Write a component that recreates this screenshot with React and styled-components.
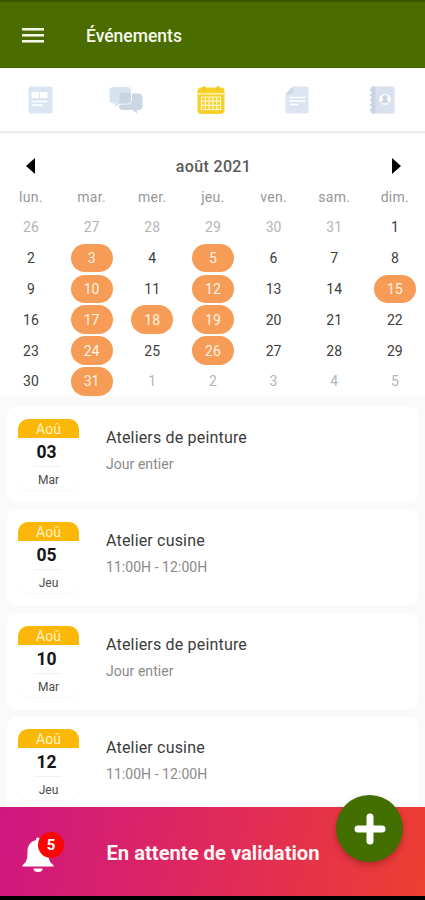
import React from 'react';
import styled, { createGlobalStyle } from 'styled-components';

const GlobalStyle = createGlobalStyle`
    * {
        box-sizing: border-box;
    }

    body {
        margin: 0;
        font-family: Roboto, "Liberation Sans", sans-serif;
        background: #fff;
    }

    button {
        padding: 0;
        border: 0;
        background: none;
        font: inherit;
        cursor: pointer;
    }
`;

const Screen = styled.div`
    display: flex;
    flex-direction: column;
    width: 425px;
    height: 900px;
    overflow: hidden;
    background: #fff;
`;

const Header = styled.header`
    display: flex;
    align-items: center;
    flex: none;
    height: 68px;
    padding: 2px 0 0 22px;
    border-top: 2px solid #3b5500;
    border-bottom: 1px solid #436200;
    background: #4b6d00;
`;

const MenuButton = styled.button`
    display: flex;
    flex-direction: column;
    gap: 3px;
    width: 22px;
    margin-right: 42px;
`;

const MenuLine = styled.span`
    height: 3px;
    border-bottom: 1px solid #a9ba80;
    background: #f4f7ea;
`;

const HeaderTitle = styled.h1`
    margin: 0;
    color: #f6f8ee;
    font-size: 17.5px;
    font-weight: 500;
    line-height: 22px;
`;

const Tabs = styled.nav`
    display: grid;
    grid-template-columns: repeat(5, 85.4px);
    flex: none;
    height: 65px;
    margin-left: -2px;
    border-bottom: 2px solid #ececec;
    box-shadow: 0 1px 3px rgba(0, 0, 0, 0.06);
`;

const Tab = styled.button`
    display: flex;
    align-items: center;
    justify-content: center;
    padding-top: 1px;
`;

const Calendar = styled.section`
    flex: none;
    height: 263px;
    padding-top: 21px;
`;

const MonthBar = styled.div`
    display: flex;
    align-items: center;
    justify-content: space-between;
    height: 24px;
    padding: 0 24px 0 26px;
`;

const Month = styled.h2`
    margin: 0;
    color: #5a5a5a;
    font-size: 16px;
    font-weight: 500;
    letter-spacing: 0.35px;
`;

const ArrowButton = styled.button`
    display: flex;
`;

const Week = styled.div`
    display: grid;
    grid-template-columns: repeat(7, 60.67px);
    height: ${(props) => (props.$head ? '34px' : '30.8px')};
    margin-left: 0.6px;
    align-items: center;
    justify-items: center;
`;

const WeekDay = styled.span`
    color: #979797;
    font-size: 14px;
    letter-spacing: 0.3px;
    padding-top: 4px;
`;

const Day = styled.span`
    display: flex;
    align-items: center;
    justify-content: center;
    width: 42px;
    height: 28.6px;
    border-radius: 15px;
    font-size: 14px;
    color: ${(props) => (props.$marked ? '#fff3e6' : props.$outside ? '#b5b5b5' : '#3d3d3d')};
    background: ${(props) => (props.$marked ? '#f79c56' : 'transparent')};
`;

const EventList = styled.main`
    display: flex;
    flex-direction: column;
    gap: 8.3px;
    flex: 1;
    min-height: 0;
    overflow: hidden;
    padding: 11px 7px 0;
    background: #fafafa;
`;

const EventCard = styled.article`
    display: flex;
    flex: none;
    height: 95px;
    padding: 12px 11px 0;
    border-radius: 9px;
    background: #fff;
`;

const DateBadge = styled.div`
    display: flex;
    flex-direction: column;
    align-items: center;
    width: 61px;
    height: 71px;
    margin-right: 27px;
    border-radius: 10px;
    overflow: hidden;
    box-shadow: 0 1px 2px rgba(0, 0, 0, 0.04);
`;

const BadgeMonth = styled.div`
    flex: none;
    width: 100%;
    height: 19px;
    background: #fbb808;
    color: #fff2c4;
    font-size: 14px;
    line-height: 21px;
    text-align: center;
`;

const BadgeDay = styled.div`
    flex: none;
    height: 28px;
    padding-right: 4px;
    color: #161616;
    font-size: 17.5px;
    font-weight: 700;
    line-height: 28px;
`;

const BadgeRule = styled.div`
    flex: none;
    width: 27px;
    height: 1px;
    margin-right: 2px;
    background: #f0f0f0;
`;

const BadgeWeekDay = styled.div`
    color: #4b4b4b;
    font-size: 12px;
    line-height: 26px;
`;

const EventTitle = styled.h3`
    margin: 9px 0 0;
    color: #3c3c3c;
    font-size: 16px;
    font-weight: 400;
    line-height: 20px;
    letter-spacing: 0.18px;
`;

const EventTime = styled.p`
    margin: 7px 0 0;
    color: #8a8a8a;
    font-size: 14px;
    line-height: 18px;
    letter-spacing: 0.05px;
`;

const Pending = styled.footer`
    position: relative;
    display: flex;
    align-items: center;
    flex: none;
    height: 89px;
    padding: 2px 0 0 20px;
    background: linear-gradient(100deg, #cf1781 0%, #df285d 48%, #ed3f32 100%);
`;

const BellButton = styled.button`
    position: relative;
    display: flex;
    width: 36px;
    height: 38px;
    margin-right: 50.5px;
`;

const Count = styled.span`
    position: absolute;
    top: -2px;
    left: 18px;
    width: 26px;
    height: 26px;
    border-radius: 50%;
    background: #fb0505;
    color: #fff;
    font-size: 15px;
    font-weight: 700;
    line-height: 26px;
    text-align: center;
`;

const PendingLabel = styled.span`
    color: #fff5f5;
    font-size: 20.2px;
    font-weight: 700;
`;

const AddButton = styled.button`
    position: absolute;
    top: -12px;
    right: 22px;
    display: flex;
    align-items: center;
    justify-content: center;
    width: 67px;
    height: 67px;
    border-radius: 50%;
    background: #436e00;
    box-shadow: 0 3px 6px rgba(60, 0, 0, 0.3);
`;

const SystemBar = styled.div`
    flex: none;
    height: 4px;
    background: #000;
`;

const NewsIcon = () => (
    <svg width="25" height="28" viewBox="0 0 25 28">
        <rect x="0.5" y="0.5" width="24" height="27" rx="2.500" fill="#dae5f1" />
        <path d="M3.500 6h7.500v6H3.500zM12 6h7.500v6H12z" fill="#fff" />
        <path d="M3.500 15.500h16M3.500 19h11" stroke="#fff" strokeWidth="1.500" />
    </svg>
);

const ChatIcon = () => (
    <svg width="36" height="28" viewBox="0 0 36 28">
        <path d="M14 7.500h16.500a4 4 0 0 1 4 4V20a4 4 0 0 1-4 4h-1.500v3.500L24.500 24H15a4 4 0 0 1-4-4z" fill="#ccd7e4" />
        <path
            d="M5 .5h14.500a4 4 0 0 1 4 4v9.500a4 4 0 0 1-4 4H12L7 21.500V18H5a4 4 0 0 1-4-4V4.500a4 4 0 0 1 4-4z"
            fill="#d8e3f0"
            stroke="#fff"
            strokeWidth="1"
        />
        <path d="M14.500 6.500H23V14a3.500 3.500 0 0 1-3.500 3.500h-8v-8a3 3 0 0 1 3-3z" fill="#c9d5e3" />
    </svg>
);

const CalendarIcon = () => (
    <svg width="28" height="29" viewBox="0 0 28 29">
        <path d="M4 1.500h20a3.500 3.500 0 0 1 3.500 3.500v19a4 4 0 0 1-4 4h-19a4 4 0 0 1-4-4V5A3.500 3.500 0 0 1 4 1.500z" fill="#f6d12c" />
        <path d="M7 1.500v2M21 1.500v2" stroke="#f3c91c" strokeWidth="3" strokeLinecap="round" />
        <path d="M1 7.800h26" stroke="#fff3b8" strokeWidth="1.400" />
        <path
            d="M4.500 11h19v12.500h-19zM4.500 15.200h19M4.500 19.400h19M8.300 11v12.500M12.100 11v12.500M15.900 11v12.500M19.700 11v12.500"
            fill="none"
            stroke="#fff7cf"
            strokeWidth="1.200"
        />
    </svg>
);

const DocumentIcon = () => (
    <svg width="24" height="28" viewBox="0 0 24 28">
        <path d="M8 .5h12.500a3 3 0 0 1 3 3v21a3 3 0 0 1-3 3h-17a3 3 0 0 1-3-3V8z" fill="#dde4f1" />
        <path d="M8 .5V5a3 3 0 0 1-3 3H.5z" fill="#cbd6e5" />
        <path d="M4.500 11.500h16M4.500 15h16M4.500 18.500h9" stroke="#fff" strokeWidth="1.600" />
    </svg>
);

const ContactsIcon = () => (
    <svg width="25" height="28" viewBox="0 0 25 28">
        <rect x="1.500" y="0.500" width="23" height="27" rx="1.500" fill="#d9e1ee" />
        <path d="M1.500 .5h4v27h-4z" fill="#cad5e4" />
        <path d="M0 4h3M0 9h3M0 14h3M0 19h3M0 24h3" stroke="#cad5e4" strokeWidth="2" />
        <path d="M9 14a6 6 0 1 1 12 0l-1.500 2.500h-9z" fill="#fff" />
        <circle cx="15" cy="11.500" r="2.500" fill="#c8d4e3" />
        <path d="M11.500 16.500c0-2 1.500-3 3.500-3s3.500 1 3.500 3z" fill="#c8d4e3" />
        <path d="M12 18h6" stroke="#fff" strokeWidth="1.200" />
    </svg>
);

const BellIcon = () => (
    <svg width="36" height="38" viewBox="0 0 36 38">
        <path
            d="M18 3.500c1.400 0 2 1.100 2 2.700 5.700 1.200 8.500 5.600 8.500 11.500 0 7.500.8 10 5 13.500v1.300H2.500v-1.300c4.200-3.500 5-6 5-13.500C7.500 11.800 10.300 7.400 16 6.200c0-1.600.6-2.700 2-2.700z"
            fill="#fff"
        />
        <path d="M13.500 34.500h9a4.500 3.500 0 0 1-9 0z" fill="#fff" />
    </svg>
);

const tabs = [NewsIcon, ChatIcon, CalendarIcon, DocumentIcon, ContactsIcon];

const weekDays = ['lun.', 'mar.', 'mer.', 'jeu.', 'ven.', 'sam.', 'dim.'];

const weeks = [
    [26, 27, 28, 29, 30, 31, 1],
    [2, 3, 4, 5, 6, 7, 8],
    [9, 10, 11, 12, 13, 14, 15],
    [16, 17, 18, 19, 20, 21, 22],
    [23, 24, 25, 26, 27, 28, 29],
    [30, 31, 1, 2, 3, 4, 5],
];

const eventDays = [3, 5, 10, 12, 15, 17, 18, 19, 24, 26, 31];

const events = [
    { day: '03', weekDay: 'Mar', title: 'Ateliers de peinture', time: 'Jour entier' },
    { day: '05', weekDay: 'Jeu', title: 'Atelier cusine', time: '11:00H - 12:00H' },
    { day: '10', weekDay: 'Mar', title: 'Ateliers de peinture', time: 'Jour entier' },
    { day: '12', weekDay: 'Jeu', title: 'Atelier cusine', time: '11:00H - 12:00H' },
];

// days of the previous or next month that fill the first and last rows
const isOutside = (day, row) => (row === 0 && day > 20) || (row === 5 && day < 10);

function App() {
    return (
        <Screen>
            <GlobalStyle />
            <Header>
                <MenuButton aria-label="Menu">
                    <MenuLine />
                    <MenuLine />
                    <MenuLine />
                </MenuButton>
                <HeaderTitle>Événements</HeaderTitle>
            </Header>

            <Tabs>
                {tabs.map((Icon, index) => (
                    <Tab key={index}>
                        <Icon />
                    </Tab>
                ))}
            </Tabs>

            <Calendar>
                <MonthBar>
                    <ArrowButton aria-label="Mois précédent">
                        <svg width="9" height="18" viewBox="0 0 9 18">
                            <path d="M9 1v16L0 9z" fill="#000" />
                        </svg>
                    </ArrowButton>
                    <Month>août 2021</Month>
                    <ArrowButton aria-label="Mois suivant">
                        <svg width="9" height="18" viewBox="0 0 9 18">
                            <path d="M0 1v16l9-8z" fill="#000" />
                        </svg>
                    </ArrowButton>
                </MonthBar>
                <Week $head>
                    {weekDays.map((name) => (
                        <WeekDay key={name}>{name}</WeekDay>
                    ))}
                </Week>
                {weeks.map((week, row) => (
                    <Week key={row}>
                        {week.map((day) => {
                            const outside = isOutside(day, row);
                            return (
                                <Day key={day} $outside={outside} $marked={!outside && eventDays.includes(day)}>
                                    {day}
                                </Day>
                            );
                        })}
                    </Week>
                ))}
            </Calendar>

            <EventList>
                {events.map((event) => (
                    <EventCard key={event.day}>
                        <DateBadge>
                            <BadgeMonth>Aoû</BadgeMonth>
                            <BadgeDay>{event.day}</BadgeDay>
                            <BadgeRule />
                            <BadgeWeekDay>{event.weekDay}</BadgeWeekDay>
                        </DateBadge>
                        <div>
                            <EventTitle>{event.title}</EventTitle>
                            <EventTime>{event.time}</EventTime>
                        </div>
                    </EventCard>
                ))}
            </EventList>

            <Pending>
                <BellButton aria-label="Notifications">
                    <BellIcon />
                    <Count>5</Count>
                </BellButton>
                <PendingLabel>En attente de validation</PendingLabel>
                <AddButton aria-label="Ajouter">
                    <svg width="32" height="32" viewBox="0 0 32 32">
                        <path d="M16 4v24M4 16h24" stroke="#fff" strokeWidth="7" strokeLinecap="round" />
                    </svg>
                </AddButton>
            </Pending>
            <SystemBar />
        </Screen>
    );
}

export default App;
